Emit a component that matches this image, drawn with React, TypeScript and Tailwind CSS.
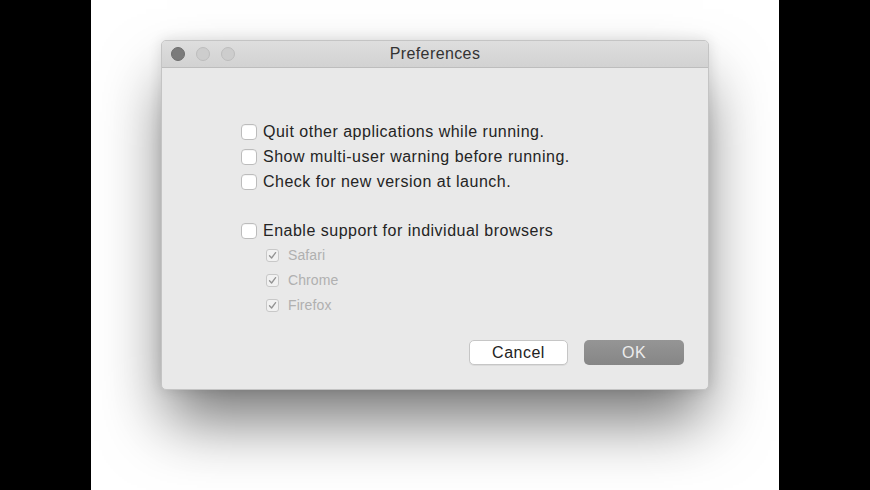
import React from "react";

function Box({ small, checked }: { small?: boolean; checked?: boolean }) {
  if (small) {
    return (
      <span className="flex h-[13px] w-[13px] items-center justify-center rounded-[3px] border border-[#c8c8c8] bg-[#f1f1f1]">
        {checked && (
          <svg width="9" height="9" viewBox="0 0 9 9">
            <path d="M1.5 4.8 L3.6 7 L7.6 1.6" fill="none" stroke="#929292" strokeWidth="1.3" strokeLinecap="round" strokeLinejoin="round" />
          </svg>
        )}
      </span>
    );
  }
  return <span className="h-[16px] w-[16px] rounded-[4px] border border-[#bcbcbc] bg-white shadow-[inset_0_1px_0_rgba(0,0,0,0.04)]" />;
}

function Row({ label }: { label: string }) {
  return (
    <div className="flex h-[25px] items-center gap-[6px]">
      <Box />
      <span className="text-[16px] tracking-[0.5px] text-[#242424]">{label}</span>
    </div>
  );
}

function SubRow({ label }: { label: string }) {
  return (
    <div className="flex h-[25px] items-center gap-[9px] pl-[25px]">
      <Box small checked />
      <span className="text-[14px] tracking-[0.1px] text-[#b0b0b0]">{label}</span>
    </div>
  );
}

export default function App() {
  return (
    <div className="flex h-[490px] w-[870px] overflow-hidden bg-black" style={{ fontFamily: '"Liberation Sans", Arial, sans-serif' }}>
      <div className="w-[91px] bg-black" />
      <div className="flex-1 bg-white pl-[70px] pt-[40px]">
        <div className="flex h-[350px] w-[548px] flex-col overflow-hidden rounded-[5px] border border-[#c4c4c4] bg-[#e9e9e9] shadow-[0_36px_60px_-6px_rgba(0,0,0,0.55),0_0_14px_rgba(0,0,0,0.12)]">
          <div className="relative flex h-[27px] items-center justify-center border-b border-[#bdbdbd] bg-gradient-to-b from-[#dedede] to-[#d2d2d2]">
            <div className="absolute left-[9px] top-[6px] flex gap-[11px]">
              <span className="h-[14px] w-[14px] rounded-full border border-[#6e6e6e] bg-[#7b7b7b]" />
              <span className="h-[14px] w-[14px] rounded-full border border-[#bdbdbd] bg-[#cdcdcd]" />
              <span className="h-[14px] w-[14px] rounded-full border border-[#bdbdbd] bg-[#cdcdcd]" />
            </div>
            <span className="text-[16px] tracking-[0.4px] text-[#333]">Preferences</span>
          </div>
          <div className="flex flex-1 flex-col pl-[79px] pr-[24px] pt-[51px]">
            <Row label="Quit other applications while running." />
            <Row label="Show multi-user warning before running." />
            <Row label="Check for new version at launch." />
            <div className="h-[24px]" />
            <Row label="Enable support for individual browsers" />
            <SubRow label="Safari" />
            <SubRow label="Chrome" />
            <SubRow label="Firefox" />
            <div className="mt-[22px] flex justify-end gap-[16px]">
              <button className="h-[25px] w-[99px] rounded-[5px] border border-[#c6c6c6] bg-white text-[16px] tracking-[0.5px] text-[#222] shadow-[0_1px_0_rgba(0,0,0,0.06)]">
                Cancel
              </button>
              <button className="h-[25px] w-[100px] rounded-[5px] bg-gradient-to-b from-[#959595] to-[#868686] text-[16px] tracking-[0.5px] text-[#ececec]">
                OK
              </button>
            </div>
          </div>
        </div>
      </div>
      <div className="w-[91px] bg-black" />
    </div>
  );
}
